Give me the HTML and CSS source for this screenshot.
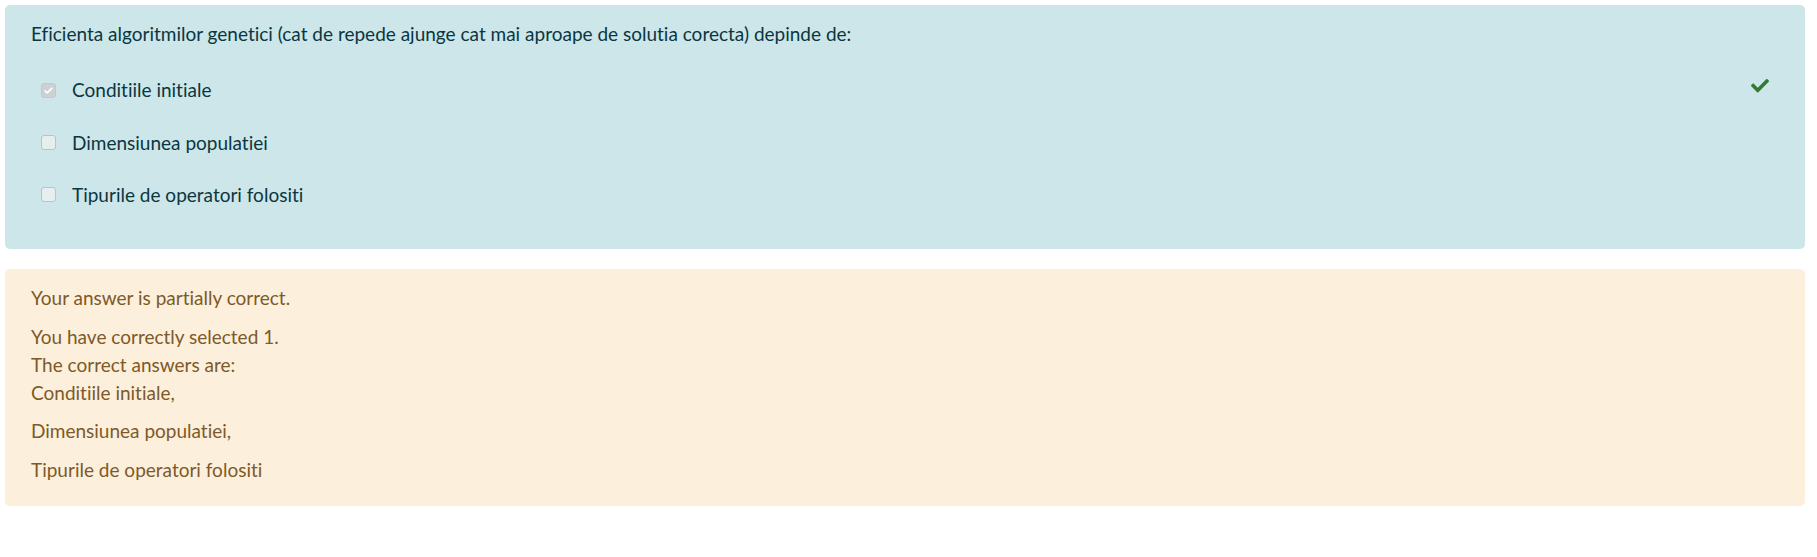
FILE: index.html
```html
<!DOCTYPE html>
<html lang="ro">
<head>
<meta charset="utf-8">
<title>Quiz question</title>
<link rel="stylesheet" href="styles.css">
</head>
<body>
<div class="page">
  <div class="formulation">
    <div class="qtext">Eficienta algoritmilor genetici (cat de repede ajunge cat mai aproape de solutia corecta) depinde de:</div>
    <div class="answers">
      <div class="row">
        <span class="cb checked"><svg viewBox="0 0 16 16" width="11" height="11"><path d="M3 8.5l3 3 7-7" fill="none" stroke="#fff" stroke-width="2.2" stroke-linecap="round" stroke-linejoin="round"/></svg></span>
        <span class="label">Conditiile initiale</span>
        <span class="icon"><svg viewBox="0 64 512 384" width="18" height="13.5"><path fill="#357a32" d="M173.898 439.404l-166.4-166.4c-9.997-9.997-9.997-26.206 0-36.204l36.203-36.204c9.997-9.998 26.207-9.998 36.204 0L192 312.69 432.095 72.596c9.997-9.997 26.207-9.997 36.204 0l36.203 36.204c9.997 9.997 9.997 26.206 0 36.204l-294.4 294.401c-9.998 9.997-26.207 9.997-36.204-.001z"/></svg></span>
      </div>
      <div class="row">
        <span class="cb"></span>
        <span class="label">Dimensiunea populatiei</span>
      </div>
      <div class="row">
        <span class="cb"></span>
        <span class="label">Tipurile de operatori folositi</span>
      </div>
    </div>
  </div>
  <div class="outcome">
    <p class="specific">Your answer is partially correct.</p>
    <div class="numparts">You have correctly selected 1.</div>
    <div class="rightanswer">
      <div>The correct answers are:</div>
      <p>Conditiile initiale,</p>
      <p>Dimensiunea populatiei,</p>
      <p>Tipurile de operatori folositi</p>
    </div>
  </div>
</div>
</body>
</html>
```
FILE: styles.css
```css
html, body {
  margin: 0;
  padding: 0;
  background: #fff;
}
body {
  font-family: Lato, "Open Sans", sans-serif;
  font-size: 19px;
  line-height: 28px;
  font-variant-ligatures: none;
  font-feature-settings: "liga" 0, "clig" 0;
}
.page {
  padding: 5px 12px 0 5px;
  display: flex;
  flex-direction: column;
  gap: 20px;
}
.formulation {
  background: #cce6ea;
  color: #0b3640;
  border-radius: 5px;
  padding: 15px 26px 25px 26px;
  height: 244px;
  box-sizing: border-box;
}
.qtext {
  margin-bottom: 16px;
}
.row {
  display: flex;
  align-items: center;
  padding: 12.2px 0;
}
.cb {
  width: 15px;
  height: 15px;
  box-sizing: border-box;
  margin-left: 9.5px;
  margin-right: 16.5px;
  border: 1px solid #b9c4c7;
  border-radius: 3px;
  background: #e6eef0;
  display: flex;
  align-items: center;
  justify-content: center;
  flex: none;
}
.cb.checked {
  background: #cdd1d3;
  border-color: #c3c8ca;
}
.label {
  flex: 1;
}
.icon {
  display: flex;
  margin-right: 10px;
  margin-top: -8px;
}
.outcome {
  background: #fcefdc;
  color: #7d5a29;
  border-radius: 5px;
  padding: 15px 26px 26px 26px;
  height: 237px;
  box-sizing: border-box;
}
.outcome p {
  margin: 0 0 10.5px 0;
}
.rightanswer p:last-child {
  margin-bottom: 0;
}
```
